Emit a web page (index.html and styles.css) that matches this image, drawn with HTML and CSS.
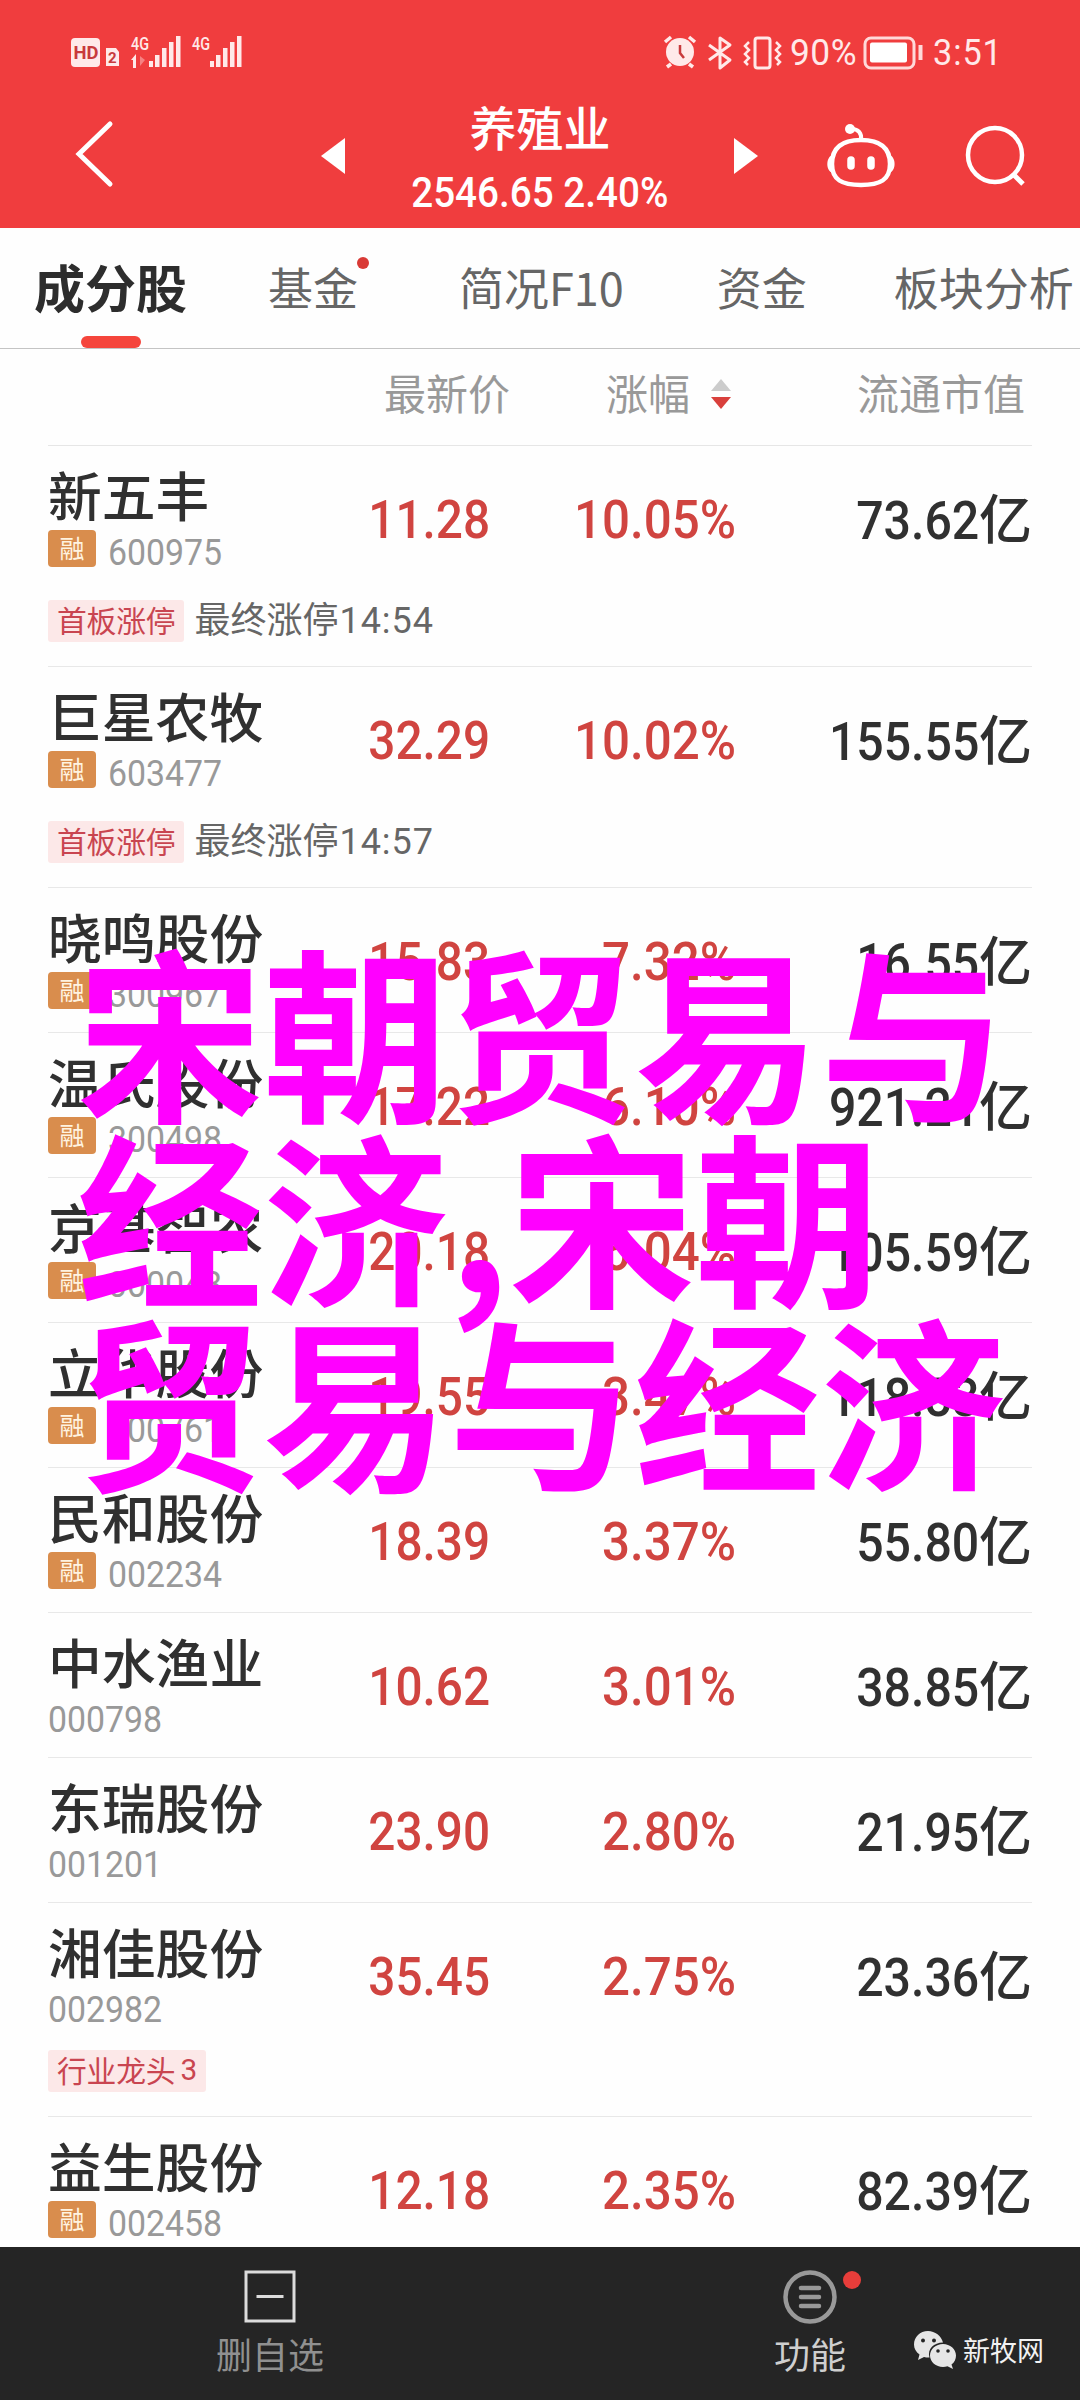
FILE: index.html
```html
<!DOCTYPE html>
<html lang="zh-CN">
<head>
<meta charset="utf-8">
<title>养殖业</title>
<link rel="stylesheet" href="styles.css">
</head>
<body>
<div class="phone">
  <header class="header">
    <div class="status">
      <svg class="status-left" width="190" height="36" viewBox="0 0 190 36" fill="#ffe9e9">
        <rect x="1" y="2" width="29" height="29" rx="4"/>
        <text x="3.500" y="23" font-size="18" font-weight="700" fill="#c83a3c" textLength="25" lengthAdjust="spacingAndGlyphs">HD</text>
        <path d="M36 12h10l3 4v14H36z"/>
        <text x="38" y="27" font-size="15" font-weight="700" fill="#c83a3c">2</text>
        <text x="61" y="14" font-size="19" font-weight="500" textLength="18" lengthAdjust="spacingAndGlyphs">4G</text>
        <path d="M61 24l5-6v14h-3v-8z"/><path d="M70 20v10l5-6z" opacity=".4"/>
        <path d="M79 25h4v6h-4zM85 19h4.500v12H85zM92 12h4.500v19H92zM99 6h4.500v25H99zM106 0h4.500v31H106z"/>
        <text x="122" y="14" font-size="19" font-weight="500" textLength="18" lengthAdjust="spacingAndGlyphs">4G</text>
        <path d="M140 25h4v6h-4zM146 19h4.500v12H146zM153 12h4.500v19H153zM160 6h4.500v25H160zM167 0h4.500v31H167z"/>
      </svg>
      <div class="status-right">
        <svg width="122" height="36" viewBox="0 0 122 36" fill="none" stroke="#ffe9e9" stroke-width="3">
          <circle cx="17" cy="16" r="14" fill="#ffe9e9" stroke="none"/>
          <path d="M2 6l6-5M32 6l-6-5M8 28l-4 3M26 28l4 3" stroke-width="3.500"/>
          <path d="M17 9v8l4 5" stroke="#c83a3c" stroke-width="2.500"/>
          <path d="M46 9l21 15-10 8V2l10 7-21 15" stroke-linejoin="round"/>
          <rect x="92" y="2" width="15" height="30" rx="2.500"/>
          <path d="M86 6l-4 4 4 4-4 4 4 4-4 4 3 3M113 6l4 4-4 4 4 4-4 4 4 4-3 3" stroke-width="2.500"/>
        </svg>
        <span class="num battery-text">90%</span>
        <svg width="62" height="36" viewBox="0 0 62 36" fill="none" stroke="#ffd9d9" stroke-width="3">
          <rect x="4" y="2" width="49" height="30" rx="6"/>
          <rect x="9" y="6.500" width="37" height="20" rx="2" fill="#fff" stroke="none"/>
          <path d="M59.500 9v15" stroke-width="4"/>
        </svg>
        <span class="num clock">3:51</span>
      </div>
    </div>
    <div class="nav">
      <svg class="back" width="40" height="68" viewBox="0 0 40 68" fill="none" stroke="#fff" stroke-width="5" stroke-linecap="round"><path d="M35 4L4 34l31 30"/></svg>
      <svg class="prev" width="24" height="36" viewBox="0 0 24 36" fill="#fff"><path d="M24 0v36L0 18z"/></svg>
      <div class="title">
        <div class="title-name">养殖业</div>
        <div class="title-quote"><span class="num">2546.65 2.40%</span></div>
      </div>
      <svg class="next" width="24" height="36" viewBox="0 0 24 36" fill="#fff"><path d="M0 0v36l24-18z"/></svg>
      <svg class="robot" width="70" height="66" viewBox="0 0 70 66" fill="none" stroke="#fff" stroke-width="4.500">
        <path d="M35 17c19 0 29 8 29 24 0 16-10 21-29 21S6 57 6 41c0-16 10-24 29-24z"/>
        <path d="M35 17c1-7-3-11-9-11" stroke-width="4"/>
        <circle cx="24" cy="6" r="5" fill="#fff" stroke="none"/>
        <path d="M7 32c-7 1-8 16 0 18zM63 32c7 1 8 16 0 18z" fill="#fff" stroke="none"/>
        <path d="M25 37v6M45 37v6" stroke-width="7.500" stroke-linecap="round"/>
      </svg>
      <svg class="search" width="62" height="64" viewBox="0 0 62 64" fill="none" stroke="#fff" stroke-width="4.500"><circle cx="30" cy="31" r="27"/><path d="M48 50l10 10" stroke-width="5"/></svg>
    </div>
  </header>

  <nav class="tabs">
    <div class="tab active">成分股</div>
    <div class="tab dot">基金</div>
    <div class="tab">简况F10</div>
    <div class="tab">资金</div>
    <div class="tab">板块分析</div>
  </nav>

  <main class="list">
    <div class="cols">
      <span class="c-price">最新价</span>
      <span class="c-pct">涨幅<svg width="20" height="30" viewBox="0 0 20 30"><path d="M10 0l10 12H0z" fill="#ccc"/><path d="M0 18h20L10 30z" fill="#d9403c"/></svg></span>
      <span class="c-val">流通市值</span>
    </div>
    <div class="row"><div class="main"><div class="stock"><div class="name">新五丰</div><div class="code"><i class="badge">融</i><span class="num">600975</span></div></div><span class="num price">11.28</span><span class="num pct">10.05%</span><span class="val"><span class="num">73.62</span>亿</span></div><div class="tags"><span class="tag">首板涨停</span><span class="note">最终涨停<b>14:54</b></span></div></div>
    <div class="row"><div class="main"><div class="stock"><div class="name">巨星农牧</div><div class="code"><i class="badge">融</i><span class="num">603477</span></div></div><span class="num price">32.29</span><span class="num pct">10.02%</span><span class="val"><span class="num">155.55</span>亿</span></div><div class="tags"><span class="tag">首板涨停</span><span class="note">最终涨停<b>14:57</b></span></div></div>
    <div class="row"><div class="main"><div class="stock"><div class="name">晓鸣股份</div><div class="code"><i class="badge">融</i><span class="num">300967</span></div></div><span class="num price">15.83</span><span class="num pct">7.32%</span><span class="val"><span class="num">16.55</span>亿</span></div></div>
    <div class="row"><div class="main"><div class="stock"><div class="name">温氏股份</div><div class="code"><i class="badge">融</i><span class="num">300498</span></div></div><span class="num price">17.22</span><span class="num pct">6.10%</span><span class="val"><span class="num">921.21</span>亿</span></div></div>
    <div class="row"><div class="main"><div class="stock"><div class="name">京基智农</div><div class="code"><i class="badge">融</i><span class="num">000048</span></div></div><span class="num price">20.18</span><span class="num pct">6.04%</span><span class="val"><span class="num">105.59</span>亿</span></div></div>
    <div class="row"><div class="main"><div class="stock"><div class="name">立华股份</div><div class="code"><i class="badge">融</i><span class="num">300761</span></div></div><span class="num price">19.55</span><span class="num pct">3.47%</span><span class="val"><span class="num">118.83</span>亿</span></div></div>
    <div class="row"><div class="main"><div class="stock"><div class="name">民和股份</div><div class="code"><i class="badge">融</i><span class="num">002234</span></div></div><span class="num price">18.39</span><span class="num pct">3.37%</span><span class="val"><span class="num">55.80</span>亿</span></div></div>
    <div class="row"><div class="main"><div class="stock"><div class="name">中水渔业</div><div class="code"><span class="num">000798</span></div></div><span class="num price">10.62</span><span class="num pct">3.01%</span><span class="val"><span class="num">38.85</span>亿</span></div></div>
    <div class="row"><div class="main"><div class="stock"><div class="name">东瑞股份</div><div class="code"><span class="num">001201</span></div></div><span class="num price">23.90</span><span class="num pct">2.80%</span><span class="val"><span class="num">21.95</span>亿</span></div></div>
    <div class="row"><div class="main"><div class="stock"><div class="name">湘佳股份</div><div class="code"><span class="num">002982</span></div></div><span class="num price">35.45</span><span class="num pct">2.75%</span><span class="val"><span class="num">23.36</span>亿</span></div><div class="tags tight"><span class="tag rank">行业龙头<b>3</b></span></div></div>
    <div class="row last"><div class="main"><div class="stock"><div class="name">益生股份</div><div class="code"><i class="badge">融</i><span class="num">002458</span></div></div><span class="num price">12.18</span><span class="num pct">2.35%</span><span class="val"><span class="num">82.39</span>亿</span></div></div>
  </main>

  <footer class="footer">
    <div class="action remove">
      <svg width="52" height="56" viewBox="0 0 52 56" fill="none" stroke="#dcdcdc" stroke-width="3"><rect x="2" y="4" width="48" height="49"/><path d="M12.500 28.500h27"/></svg>
      <span>删自选</span>
    </div>
    <div class="action more">
      <svg width="54" height="56" viewBox="0 0 54 56" fill="none" stroke="#999"><circle cx="27" cy="29" r="24.500" stroke-width="4.500"/><path d="M18 20h18M18 29h18M18 38h18" stroke-width="4.500" stroke-linecap="round"/></svg>
      <span>功能</span>
    </div>
    <div class="source">
      <svg width="44" height="40" viewBox="0 0 44 40" fill="#e6e6e6">
        <path d="M15 1C7 1 1 7 1 14.500c0 4 2 7.500 5.500 10L5 30l6-3c2 .5 3.500.7 5.500.6C14 19 21 12.500 30 12.500 28.500 6 22 1 15 1z"/>
        <path d="M30 14c-7 0-13 5-13 11.500S23 37 30 37c1.500 0 3-.2 4.500-.7L40 39l-1.500-4.500C41.500 32.500 43 29 43 25.500 43 19 37 14 30 14z"/>
        <g fill="#252525"><circle cx="10" cy="10.500" r="2"/><circle cx="21" cy="10.500" r="2"/><circle cx="25" cy="21" r="1.800"/><circle cx="35" cy="21" r="1.800"/></g>
      </svg>
      <span>新牧网</span>
    </div>
  </footer>

  <div class="overlay">宋朝贸易与<br>经济,宋朝<br>贸易与经济</div>
</div>
</body>
</html>
```
FILE: styles.css
```css
* { box-sizing: border-box; }
body {
  margin: 0;
  background: #fefefe;
  font-family: "Noto Sans CJK SC", sans-serif;
  color: #303030;
}
.phone {
  position: relative;
  width: 1080px;
  height: 2400px;
  overflow: hidden;
  display: flex;
  flex-direction: column;
}
svg { display: block; flex: none; overflow: visible; }
svg text { font-family: Roboto, sans-serif; }
.num {
  display: inline-block;
  font-family: Roboto, sans-serif;
  transform: scaleX(.9);
  white-space: nowrap;
}

/* header */
.header { height: 228px; flex: none; background: #f03d3e; color: #fff; }
.status {
  height: 104px;
  padding: 36px 75px 0 70px;
  display: flex;
  justify-content: space-between;
}
.status-right { display: flex; width: 342px; line-height: 35px; font-size: 36px; color: #ffe9e9; }
.battery-text { width: 74px; margin-left: 5px; transform: scaleX(.98); transform-origin: left; letter-spacing: .5px; }
.battery-text + svg { margin-left: 3px; }
.clock { margin-left: 10px; transform: scaleX(.95); transform-origin: left; letter-spacing: 1px; }
.nav { height: 124px; display: flex; align-items: flex-start; }
.back { margin: 16px 0 0 75px; }
.prev { margin: 34px 0 0 206px; }
.title { width: 390px; text-align: center; }
.title-name { margin-top: -4px; font-size: 47px; line-height: 52px; font-weight: 500; }
.title-quote { margin-top: 12px; font-size: 42px; line-height: 50px; font-weight: 500; white-space: nowrap; }
.title-quote .num { transform: scaleX(.92); }
.next { margin: 34px 0 0 -1px; }
.robot { margin: 19px 0 0 68px; }
.search { margin: 20px 0 0 69px; }

/* tabs */
.tabs {
  height: 121px;
  flex: none;
  display: flex;
  padding-left: 34px;
  border-bottom: 1px solid #c4c4c4;
  font-size: 45px;
  line-height: 117px;
  color: #666;
  white-space: nowrap;
}
.tab { position: relative; margin-right: 92px; }
.tab:nth-child(2) { margin-right: 101px; }
.tab:nth-child(3) { margin-right: 93px; }
.tab:nth-child(4) { margin-right: 87px; }
.tab.active { margin-right: 81px; font-size: 51px; font-weight: 700; color: #2d2d2d; }
.tab.active::after {
  content: "";
  position: absolute;
  left: 47px;
  bottom: 0;
  width: 60px;
  height: 12px;
  border-radius: 6px;
  background: #f5453c;
}
.tab.dot::after {
  content: "";
  position: absolute;
  right: -11px;
  top: 29px;
  width: 12px;
  height: 12px;
  border-radius: 50%;
  background: #d93a36;
}

/* list */
.list { height: 1898px; flex: none; overflow: hidden; padding: 0 48px; }
.cols {
  height: 97px;
  padding-bottom: 11px;
  display: grid;
  grid-template-columns: 462px 222px 1fr;
  align-items: center;
  border-bottom: 1px solid #e6e6e6;
  font-size: 42px;
  color: #999;
}
.cols span { text-align: right; }
.c-pct { display: flex; align-items: center; justify-content: flex-end; gap: 21px; }
.c-pct svg { margin: 4px 1px 0 0; }
.cols .c-val { padding-right: 7px; }
.row { border-bottom: 1px solid #e8e8e8; }
.main {
  height: 144px;
  display: grid;
  grid-template-columns: 301px 141px 246px 1fr;
}
.name { margin-top: 18px; height: 60px; font-size: 53.800px; line-height: 60px; font-weight: 500; white-space: nowrap; }
.code { height: 38px; margin-top: 5px; display: flex; align-items: center; font-size: 36px; color: #999; }
.code .num { transform: scaleX(.94); transform-origin: left; padding-top: 9px; line-height: 38px; }
.badge {
  width: 48px;
  height: 37px;
  margin-right: 12px;
  border-radius: 4px;
  background: #d98d4d;
  color: #fff3e0;
  font-style: normal;
  font-size: 25px;
  line-height: 34px;
  text-align: center;
}
.price, .pct, .val { font-size: 53px; line-height: 149px; font-weight: 500; text-align: right; transform-origin: right; white-space: nowrap; }
.price, .pct { color: #d04440; }
.pct { transform: scaleX(.93); }
.val { line-height: 141px; }
.val .num { transform: scaleX(.91); transform-origin: right; }
.tags { height: 76px; padding-top: 10px; display: flex; align-items: flex-start; gap: 10px; }
.tags.tight { height: 69px; padding-top: 3px; }
.tag {
  height: 42px;
  padding: 0 9px;
  border-radius: 3px;
  background: #fce8e8;
  color: #c94550;
  font-size: 29.800px;
  line-height: 39px;
  letter-spacing: -.2px;
  white-space: nowrap;
}
.rank { display: flex; gap: 5px; }
.tag b, .note b { font-family: Roboto, sans-serif; font-weight: 400; }
.note { font-size: 36px; line-height: 34px; color: #666; }
.note b { letter-spacing: 1px; margin-left: 1px; }
.last { border-bottom: 0; }

/* footer */
.footer { height: 153px; flex: none; background: #252525; display: flex; align-items: flex-start; }
.action { width: 540px; display: flex; flex-direction: column; align-items: center; padding-top: 21px; font-size: 36px; line-height: 44px; color: #909090; }
.action span { margin-top: 7px; }
.more { position: relative; color: #cfcfcf; }
.more::after {
  content: "";
  position: absolute;
  left: 303px;
  top: 24px;
  width: 18px;
  height: 18px;
  border-radius: 50%;
  background: #e83d3a;
}
.source {
  position: absolute;
  left: 913px;
  top: 2330px;
  display: flex;
  gap: 6px;
  color: #f2f2f2;
  font-size: 27px;
  line-height: 39px;
}

.overlay {
  position: absolute;
  left: 77px;
  top: 935px;
  font-size: 185.800px;
  line-height: 184.500px;
  font-weight: 700;
  color: #f0f;
  white-space: nowrap;
}
```
